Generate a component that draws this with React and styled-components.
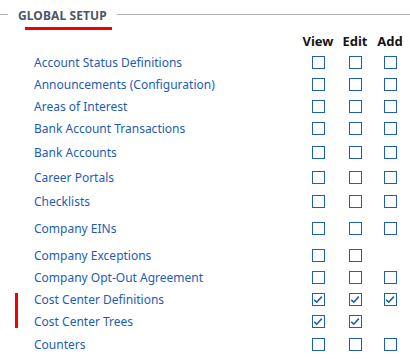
import React from "react";
import styled, { createGlobalStyle } from "styled-components";

const Global = createGlobalStyle`
  html, body { margin: 0; padding: 0; background: #fff; }
  body { font-family: "Noto Sans", "Open Sans", sans-serif; }
`;

const Page = styled.div`
  width: 410px;
  height: 359px;
  overflow: hidden;
  background: #fff;
`;

const Legend = styled.div`
  display: flex;
  align-items: center;
  height: 28px;
`;

const Rule = styled.div`
  height: 1px;
  background: #b3b3b3;
  flex: ${(p) => (p.$grow ? 1 : "none")};
  width: ${(p) => (p.$grow ? "auto" : `${p.$w}px`)};
`;

const LegendText = styled.div`
  margin: 0 10px;
  padding-top: 3px;
  font-size: 12px;
  font-weight: 700;
  color: #4d5664;
  letter-spacing: 0.1px;
  white-space: nowrap;
`;

const Underline = styled.div`
  margin-top: -1px;
  margin-left: 25px;
  width: 87px;
  height: 3px;
  background: #f40000;
`;

const Grid = styled.div`
  display: grid;
  grid-template-columns: 1fr 36px 38px 32px;
  padding-right: 4px;
`;

const HeadCell = styled.div`
  height: 22px;
  display: flex;
  align-items: center;
  justify-content: center;
  font-size: 13px;
  font-weight: 700;
  color: #151515;
`;

const Row = styled.div`
  display: contents;
`;

const Label = styled.div`
  position: relative;
  height: ${(p) => p.$h}px;
  display: flex;
  align-items: center;
  padding-left: 34px;
  font-size: 12px;
  color: #1c5db3;
  white-space: nowrap;
`;

const Marker = styled.span`
  position: absolute;
  left: 15px;
  top: ${(p) => p.$top}px;
  width: 3px;
  height: ${(p) => p.$len}px;
  background: #f40000;
`;

const Cell = styled.div`
  height: ${(p) => p.$h}px;
  display: flex;
  align-items: center;
  justify-content: center;
`;

const Box = styled.span`
  box-sizing: border-box;
  width: 13px;
  height: 13px;
  border: 1.5px solid #1f5fb2;
  background: #fff;
  display: flex;
  align-items: center;
  justify-content: center;
`;

const Check = () => (
  <svg width="10" height="9" viewBox="0 0 10 9">
    <path d="M1.2 4.8 L3.8 7.2 L8.8 1.6" fill="none" stroke="#1f5fb2" strokeWidth="1.6" />
  </svg>
);

const CheckBox = ({ checked }) => <Box>{checked ? <Check /> : null}</Box>;

const rows = [
  { label: "Account Status Definitions", h: 21, boxes: [0, 0, 0] },
  { label: "Announcements (Configuration)", h: 22, boxes: [0, 0, 0] },
  { label: "Areas of Interest", h: 22, boxes: [0, 0, 0] },
  { label: "Bank Account Transactions", h: 23, boxes: [0, 0, 0] },
  { label: "Bank Accounts", h: 25, boxes: [0, 0, 0] },
  { label: "Career Portals", h: 24, boxes: [0, 0, 0] },
  { label: "Checklists", h: 24, boxes: [0, 0, 0] },
  { label: "Company EINs", h: 30, boxes: [0, 0, 0] },
  { label: "Company Exceptions", h: 24, boxes: [0, 0, null] },
  { label: "Company Opt-Out Agreement", h: 21, boxes: [0, 0, 0] },
  { label: "Cost Center Definitions", h: 22, boxes: [1, 1, 1], marker: [5, 35] },
  { label: "Cost Center Trees", h: 22, boxes: [1, 1, null] },
  { label: "Counters", h: 24, boxes: [0, 0, 0] },
];

export default function App() {
  return (
    <Page>
      <Global />
      <Legend>
        <Rule $w={8} />
        <LegendText>GLOBAL SETUP</LegendText>
        <Rule $grow />
      </Legend>
      <Underline />
      <Grid>
        <HeadCell />
        <HeadCell>View</HeadCell>
        <HeadCell>Edit</HeadCell>
        <HeadCell>Add</HeadCell>
        {rows.map((r) => (
          <Row key={r.label}>
            <Label $h={r.h}>
              {r.marker ? <Marker $top={r.marker[0]} $len={r.marker[1]} /> : null}
              {r.label}
            </Label>
            {r.boxes.map((b, i) => (
              <Cell key={i} $h={r.h}>
                {b === null ? null : <CheckBox checked={!!b} />}
              </Cell>
            ))}
          </Row>
        ))}
      </Grid>
    </Page>
  );
}
